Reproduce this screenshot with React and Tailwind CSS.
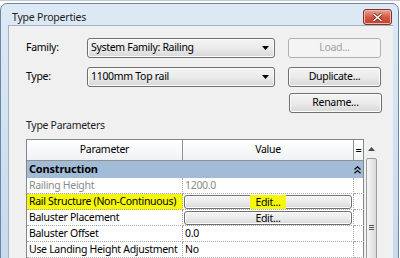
import React from 'react';

const face =
  'flex items-center rounded-[3px] border border-[#707070] bg-linear-to-b from-[#f4f4f4] via-[#ebebeb] to-[#d8d8d8] shadow-[inset_0_0_0_1px_#fcfcfc]';

const CloseButton = () => (
  <div className="mt-[5px] mr-[1px] w-[29px] h-[16px] rounded-[3px] border border-[#7e3328] bg-linear-to-b from-[#e8a497] via-[#d55a45] to-[#c23d2a] flex items-center justify-center shadow-[inset_0_0_0_1px_#f0b8ad]">
    <svg width="11" height="9" viewBox="0 0 11 9">
      <path d="M1.5 1 L9.5 8 M9.5 1 L1.5 8" stroke="#6b2a20" strokeWidth="3" />
      <path d="M1.5 1 L9.5 8 M9.5 1 L1.5 8" stroke="#ffffff" strokeWidth="1.6" />
    </svg>
  </div>
);

const Combo = ({ text }) => (
  <div className={`${face} w-[188px] h-[20px] justify-between pl-[3px] pr-[5px]`}>
    <span>{text}</span>
    <svg width="7" height="4" viewBox="0 0 7 4">
      <path d="M0 0 H7 L3.5 4 Z" fill="#000" />
    </svg>
  </div>
);

const Button = ({ text, disabled }) => (
  <div
    className={
      disabled
        ? 'w-[93px] h-[20px] rounded-[3px] border border-[#adb2b5] bg-[#f4f4f4] flex items-center justify-center text-[#a0a0a0]'
        : `${face} justify-center w-[93px] h-[20px]`
    }
  >
    {text}
  </div>
);

const Row = ({ name, value, gray, edit, hl, hlEdit }) => (
  <div className="flex h-[16px] bg-white">
    <div
      className={`w-[156px] shrink-0 border-r border-b border-dotted border-[#a8a8a8] pl-[2px] leading-[15px] whitespace-nowrap overflow-hidden ${
        hl ? 'bg-[#f6f70a]' : ''
      } ${gray ? 'text-[#8a8a8a]' : 'text-black'}`}
    >
      {name}
    </div>
    <div className="w-[171px] shrink-0 border-r border-b border-dotted border-[#a8a8a8] px-[1px]">
      {edit ? (
        <div className={`${face} justify-center h-[14px] mt-[0.5px] border-[#5a5a5a]`}>
          <span className={`leading-[14px] ${hlEdit ? 'bg-[#f6f70a] px-[5px]' : ''}`}>Edit...</span>
        </div>
      ) : (
        <span className={`pl-[1px] leading-[15px] ${gray ? 'text-[#8a8a8a]' : 'text-black'}`}>{value}</span>
      )}
    </div>
    <div className="w-[10px] shrink-0 border-b border-dotted border-[#a8a8a8]" />
  </div>
);

export default function App() {
  return (
    <div className="w-[400px] h-[258px] overflow-hidden bg-white font-['Noto_Sans',sans-serif] text-[10.5px] tracking-[-0.3px] text-black">
      <div className="h-[3px] bg-white border-t border-[#c8c8c8]" />
      <div className="w-[399px] h-[300px] rounded-t-[7px] border border-[#6a86a6] bg-linear-to-b from-[#dde9f5] to-[#c4d7ec] pl-[7px] pr-[5px] flex flex-col">
        <div className="h-[23px] flex justify-between items-start">
          <span className="mt-[5px] ml-[4px] text-[10.5px] tracking-[-0.2px] leading-[16px] text-[#1e1e1e]">Type Properties</span>
          <CloseButton />
        </div>
        <div className="flex-1 bg-[#f0f0f0] border-t border-l border-[#9fb2c8] pt-[12px] pl-[17px] flex flex-col">
          <div className="flex items-center h-[20px]">
            <span className="w-[61px]">Family:</span>
            <Combo text="System Family: Railing" />
            <div className="ml-[13px]">
              <Button text="Load..." disabled />
            </div>
          </div>
          <div className="flex items-center h-[20px] mt-[9px]">
            <span className="w-[61px]">Type:</span>
            <Combo text="1100mm Top rail" />
            <div className="ml-[13px]">
              <Button text="Duplicate..." />
            </div>
          </div>
          <div className="flex justify-end h-[20px] mt-[6px] pr-[11px]">
            <Button text="Rename..." />
          </div>
          <div className="mt-[5px] h-[14px] leading-[14px] text-[#1e1e1e]">Type Parameters</div>
          <div className="mt-[7px] flex">
            <div className="w-[338px] border-l border-t border-r border-[#828790] bg-white">
              <div className="flex h-[21px] border-b border-[#8e8f8f] bg-linear-to-b from-[#ffffff] to-[#f1f2f4]">
                <div className="w-[156px] shrink-0 border-r border-[#8e8f8f] flex items-center justify-center">Parameter</div>
                <div className="w-[171px] shrink-0 border-r border-[#8e8f8f] flex items-center justify-center">Value</div>
                <div className="w-[9px] flex items-center justify-center text-[11px]">=</div>
              </div>
              <div className="flex h-[17px] bg-[#a2bbd7] items-center justify-between pl-[2px] pr-[2px]">
                <span className="font-bold text-[11px] tracking-[-0.2px]">Construction</span>
                <svg width="7" height="8" viewBox="0 0 7 8">
                  <path d="M0.5 3.5 L3.5 0.8 L6.5 3.5 M0.5 7.2 L3.5 4.5 L6.5 7.2" stroke="#000" strokeWidth="1.2" fill="none" />
                </svg>
              </div>
              <Row name="Railing Height" value="1200.0" gray />
              <Row name="Rail Structure (Non-Continuous)" edit hl hlEdit />
              <Row name="Baluster Placement" edit />
              <Row name="Baluster Offset" value="0.0" />
              <Row name="Use Landing Height Adjustment" value="No" />
              <Row name="" value="" />
            </div>
            <div className="ml-[1px] w-[13px] flex flex-col">
              <div className="h-[19px] flex items-center justify-center">
                <svg width="7" height="4" viewBox="0 0 7 4">
                  <path d="M0 4 H7 L3.5 0 Z" fill="#4a4a4a" />
                </svg>
              </div>
              <div className="h-[160px] mx-[1px] rounded-t-[2px] border border-[#9c9c9c] bg-linear-to-r from-[#f6f6f6] to-[#d9d9d9] flex flex-col items-center pt-[66px] gap-[1px]">
                <div className="w-[5px] h-px bg-[#555]" />
                <div className="w-[5px] h-px bg-[#555]" />
                <div className="w-[5px] h-px bg-[#555]" />
              </div>
            </div>
          </div>
        </div>
      </div>
    </div>
  );
}
